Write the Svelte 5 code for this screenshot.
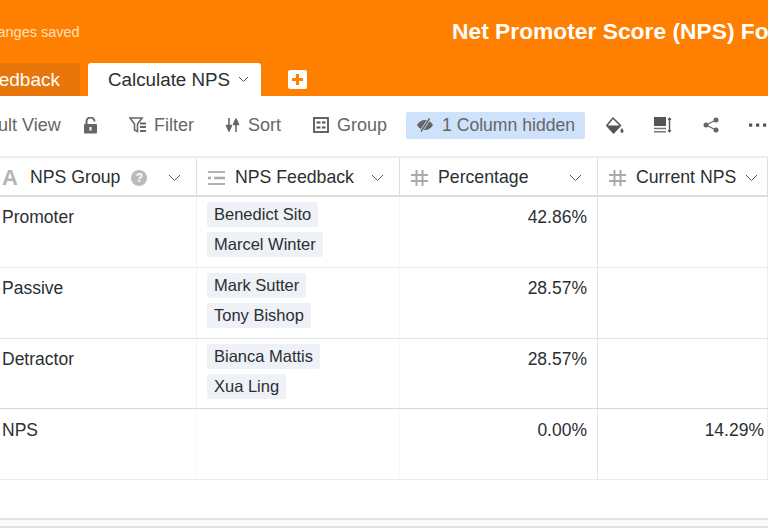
<script lang="ts">
  const rows = [
    { group: "Promoter", people: ["Benedict Sito", "Marcel Winter"], pct: "42.86%", nps: "" },
    { group: "Passive", people: ["Mark Sutter", "Tony Bishop"], pct: "28.57%", nps: "" },
    { group: "Detractor", people: ["Bianca Mattis", "Xua Ling"], pct: "28.57%", nps: "" },
    { group: "NPS", people: [], pct: "0.00%", nps: "14.29%" },
  ];
</script>

<div class="page">
  <header class="top">
    <div class="title-row">
      <span class="saved">All changes saved</span>
      <h1>Net Promoter Score (NPS) Form</h1>
    </div>
    <div class="tabs">
      <span class="tab-old">NPS Feedback</span>
      <span class="tab-active">
        Calculate NPS
        <svg width="11" height="7" viewBox="0 0 11 7"><path d="M1 1l4.500 4.500L10 1" fill="none" stroke="#555" stroke-width="1" /></svg>
      </span>
      <span class="tab-add">
        <svg width="19" height="19" viewBox="0 0 19 19"><rect width="19" height="19" rx="2" fill="#fff" /><path d="M9.500 4v11M4 9.500h11" stroke="#ff8000" stroke-width="3" /></svg>
      </span>
    </div>
  </header>

  <div class="toolbar">
    <span class="tool view">Default View</span>
    <span class="tool lock">
      <svg width="15" height="17" viewBox="0 0 15 17"><path d="M3.500 7V4.500a4 4 0 0 1 8 0" fill="none" stroke="#666" stroke-width="2" /><rect x="1" y="7" width="13" height="9.500" rx="1" fill="#666" /><rect x="6.500" y="10" width="2" height="3.500" fill="#fff" /></svg>
    </span>
    <span class="tool filter">
      <svg width="18" height="16" viewBox="0 0 18 16"><path d="M1 1h12L8.500 7v7.500L5.500 13V7z" fill="none" stroke="#666" stroke-width="1.600" /><path d="M11 6.500h6M11 10h6M11 14h6" stroke="#666" stroke-width="1.800" /></svg>
      Filter
    </span>
    <span class="tool sort">
      <svg width="15" height="16" viewBox="0 0 15 16"><path d="M4 1v9M1.500 8.500l2.500 5.500 2.500-5.500zM11 15V6M8.500 7.500l2.500-5.500 2.500 5.500z" fill="#666" stroke="#666" stroke-width="1.600" stroke-linejoin="round" /></svg>
      Sort
    </span>
    <span class="tool group">
      <svg width="16" height="16" viewBox="0 0 16 16"><rect x="1" y="1" width="14" height="14" fill="none" stroke="#555" stroke-width="1.800" /><path d="M3.500 5.500h4M9 5.500h3.500M3.500 10.500h4M9 10.500h3.500" stroke="#555" stroke-width="2" /></svg>
      Group
    </span>
    <span class="tool hidden-cols">
      <svg width="18" height="14" viewBox="0 0 18 14"><path d="M1 7c2-3.400 4.800-5 8-5s6 1.600 8 5c-2 3.400-4.800 5-8 5s-6-1.600-8-5z" fill="#666" /><path d="M13.500 0.500L5 13.500" stroke="#cfe2fb" stroke-width="3" /><path d="M13.500 0.500L5 13.500" stroke="#666" stroke-width="1.500" /></svg>
      1 Column hidden
    </span>
    <span class="tool paint">
      <svg width="18" height="17" viewBox="0 0 18 17"><path d="M7 1L0.800 8.500 7.500 16l7-7.500z" fill="none" stroke="#555" stroke-width="1.500" stroke-linejoin="round" /><path d="M1 8.500h13.500L7.500 16z" fill="#555" /><path d="M16 11c1 1.500 1.500 2.200 1.500 3.200a1.500 1.500 0 0 1-3 0c0-1 .5-1.700 1.500-3.200z" fill="#555" /></svg>
    </span>
    <span class="tool height">
      <svg width="18" height="16" viewBox="0 0 18 16"><rect x="0" y="0" width="12" height="9" fill="#555" /><path d="M0 11.500h12M0 14.800h12" stroke="#777" stroke-width="1.500" /><path d="M15.500 1v14" stroke="#555" stroke-width="1.400" /><path d="M13.500 3l2-3 2 3zM13.500 13l2 3 2-3z" fill="#555" /></svg>
    </span>
    <span class="tool share">
      <svg width="16" height="16" viewBox="0 0 16 16"><path d="M13 3L3 8l10 5" fill="none" stroke="#666" stroke-width="1.200" /><circle cx="13" cy="3" r="2.500" fill="#666" /><circle cx="3" cy="8" r="2.500" fill="#666" /><circle cx="13" cy="13" r="2.500" fill="#666" /></svg>
    </span>
    <span class="tool more">
      <svg width="18" height="4" viewBox="0 0 18 4"><rect x="0" y="0.500" width="3.200" height="3.200" fill="#555" /><rect x="7" y="0.500" width="3.200" height="3.200" fill="#555" /><rect x="14" y="0.500" width="3.200" height="3.200" fill="#555" /></svg>
    </span>
  </div>

  <div class="table">
    <div class="row head">
      <div class="cell c1">
        <span class="type-a">A</span>
        <span class="name">NPS Group</span>
        <span class="help">?</span>
        <svg class="caret" width="13" height="8" viewBox="0 0 13 8"><path d="M1 1l5.500 5.500L12 1" fill="none" stroke="#555" stroke-width="1" /></svg>
      </div>
      <div class="cell c2">
        <svg class="type" width="17" height="14" viewBox="0 0 17 14"><path d="M0 1h17M0 13h17" stroke="#999" stroke-width="1.500" /><path d="M0 7h3M6 7h11" stroke="#aaa" stroke-width="2.500" /></svg>
        <span class="name">NPS Feedback</span>
        <svg class="caret" width="13" height="8" viewBox="0 0 13 8"><path d="M1 1l5.500 5.500L12 1" fill="none" stroke="#555" stroke-width="1" /></svg>
      </div>
      <div class="cell c3">
        <svg class="type" width="17" height="16" viewBox="0 0 17 16"><path d="M5.500 0v16M11.500 0v16M0 5h17M0 11h17" stroke="#aaa" stroke-width="2" /></svg>
        <span class="name">Percentage</span>
        <svg class="caret" width="13" height="8" viewBox="0 0 13 8"><path d="M1 1l5.500 5.500L12 1" fill="none" stroke="#555" stroke-width="1" /></svg>
      </div>
      <div class="cell c4">
        <svg class="type" width="17" height="16" viewBox="0 0 17 16"><path d="M5.500 0v16M11.500 0v16M0 5h17M0 11h17" stroke="#aaa" stroke-width="2" /></svg>
        <span class="name">Current NPS</span>
        <svg class="caret" width="13" height="8" viewBox="0 0 13 8"><path d="M1 1l5.500 5.500L12 1" fill="none" stroke="#555" stroke-width="1" /></svg>
      </div>
    </div>

    {#each rows as row}
      <div class="row body">
        <div class="cell c1">{row.group}</div>
        <div class="cell c2">
          {#each row.people as person}
            <span class="chip">{person}</span>
          {/each}
        </div>
        <div class="cell c3 num">{row.pct}</div>
        <div class="cell c4 num">{row.nps}</div>
      </div>
    {/each}

    <div class="row empty"></div>
  </div>
  <div class="foot"></div>
</div>

<style>
  :global(body) {
    margin: 0;
    background: #fff;
  }

  .page {
    width: 768px;
    height: 528px;
    overflow: hidden;
    font-family: "Liberation Sans", Arial, sans-serif;
    color: #2b2f33;
    display: flex;
    flex-direction: column;
  }

  .top {
    height: 96px;
    flex-shrink: 0;
    background: #ff8000;
    display: flex;
    flex-direction: column;
  }

  .title-row {
    height: 63px;
    display: flex;
    align-items: center;
    white-space: nowrap;
  }

  .saved {
    font-size: 14.5px;
    color: #ffe0bd;
    margin-left: -38px;
    width: 155px;
    flex-shrink: 0;
  }

  h1 {
    margin: 0 0 0 335px;
    font-size: 22.8px;
    font-weight: 700;
    color: #fff;
    flex-shrink: 0;
  }

  .tabs {
    height: 33px;
    display: flex;
    white-space: nowrap;
  }

  .tab-old {
    flex-shrink: 0;
    width: 80px;
    font-size: 19px;
    line-height: 33px;
    color: #fff;
    background: #e8760a;
    text-align: right;
    padding-right: 20px;
    box-sizing: border-box;
    direction: rtl;
    overflow: hidden;
  }

  .tab-active {
    margin-left: 8px;
    width: 173px;
    box-sizing: border-box;
    padding-left: 20px;
    background: #fff;
    border-radius: 3px 3px 0 0;
    font-size: 18.8px;
    line-height: 33px;
    display: flex;
    align-items: center;
    gap: 8px;
  }

  .tab-add {
    margin-left: 27px;
    display: flex;
    align-items: center;
  }

  .toolbar {
    height: 60px;
    flex-shrink: 0;
    box-sizing: border-box;
    padding-bottom: 2px;
    display: flex;
    align-items: center;
    white-space: nowrap;
    font-size: 18px;
    color: #666;
  }

  .tool {
    display: flex;
    align-items: center;
    gap: 7px;
    flex-shrink: 0;
  }

  .view { margin-left: -40px; width: 123px; }
  .lock { width: 46px; }
  .filter { width: 96px; }
  .sort { width: 88px; gap: 8px; }
  .group { width: 93px; gap: 8px; }
  .hidden-cols {
    width: 179px;
    height: 27px;
    box-sizing: border-box;
    padding-left: 10px;
    background: #cfe2fb;
    border-radius: 2px;
    font-size: 17.6px;
    gap: 8px;
  }
  .paint { margin-left: 21px; width: 48px; }
  .height { width: 49px; }
  .share { width: 46px; }

  .table {
    flex: none;
    height: 364px;
    display: flex;
    flex-direction: column;
    border-top: 2px solid #eee;
    box-sizing: border-box;
  }

  .row {
    display: flex;
    flex-shrink: 0;
    border-bottom: 1px solid #e4e4e4;
    box-sizing: border-box;
  }

  .cell {
    box-sizing: border-box;
    flex-shrink: 0;
    border-right: 1px solid #e6e6e6;
  }

  .c1 { width: 197px; padding-left: 2px; }
  .c2 { width: 203px; }
  .c3 { width: 198px; }
  .c4 { width: 170px; }

  .head {
    height: 39px;
    border-bottom: 2px solid #ddd;
  }

  .head .cell {
    display: flex;
    align-items: center;
    padding-top: 2px;
    font-size: 17.7px;
    border-right-color: #ddd;
  }

  .head .c2, .head .c3, .head .c4 { padding-left: 11px; }

  .type { flex-shrink: 0; }

  .type-a {
    font-size: 22px;
    font-weight: 700;
    color: #b4b4b4;
    width: 28px;
    line-height: 1;
  }

  .name { margin-left: 10px; }
  .type-a + .name { margin-left: 0; }

  .help {
    width: 16px;
    height: 16px;
    border-radius: 50%;
    background: #bbb;
    color: #fff;
    font-size: 12px;
    font-weight: 700;
    text-align: center;
    line-height: 16px;
    margin-left: 11px;
  }

  .caret {
    margin-left: auto;
    margin-right: 15px;
  }

  .head .c4 .caret { margin-right: 9px; }

  .body {
    height: 71px;
    font-size: 17.5px;
  }

  .body:nth-child(2), .body:nth-child(5) { border-bottom-color: #ececec; }
  .body:nth-child(4) {
    height: 70px;
    border-bottom-color: #d8d8d8;
  }

  .body .cell {
    padding-top: 10px;
    line-height: 20px;
  }

  .body:nth-child(5) .cell { padding-top: 11px; }

  .body .c1 { border-right-color: #f3f3f3; }
  .body .c3 { border-right-color: #e4e4e4; }
  .body .c4 { border-right-color: #eee; }

  .body .c2 {
    padding: 5px 0 0 10px;
    border-right-color: #f8f8f8;
    display: flex;
    flex-direction: column;
    align-items: flex-start;
    gap: 5px;
  }

  .body:nth-child(5) .c1, .body:nth-child(5) .c2 { border-right-color: #f8f8f8; }

  .chip {
    height: 25px;
    line-height: 25px;
    padding: 0 7px;
    font-size: 16.5px;
    background: #eef1f6;
    border-radius: 2px;
  }

  .num {
    text-align: right;
    padding-right: 10px;
  }

  .c4.num { padding-right: 3px; }

  .empty {
    height: 40px;
    border-bottom: 2px solid #e4e4e4;
  }

  .foot {
    flex: 1;
    background: #fbfbfb;
    border-bottom: 2px solid #e2e2de;
  }
</style>
